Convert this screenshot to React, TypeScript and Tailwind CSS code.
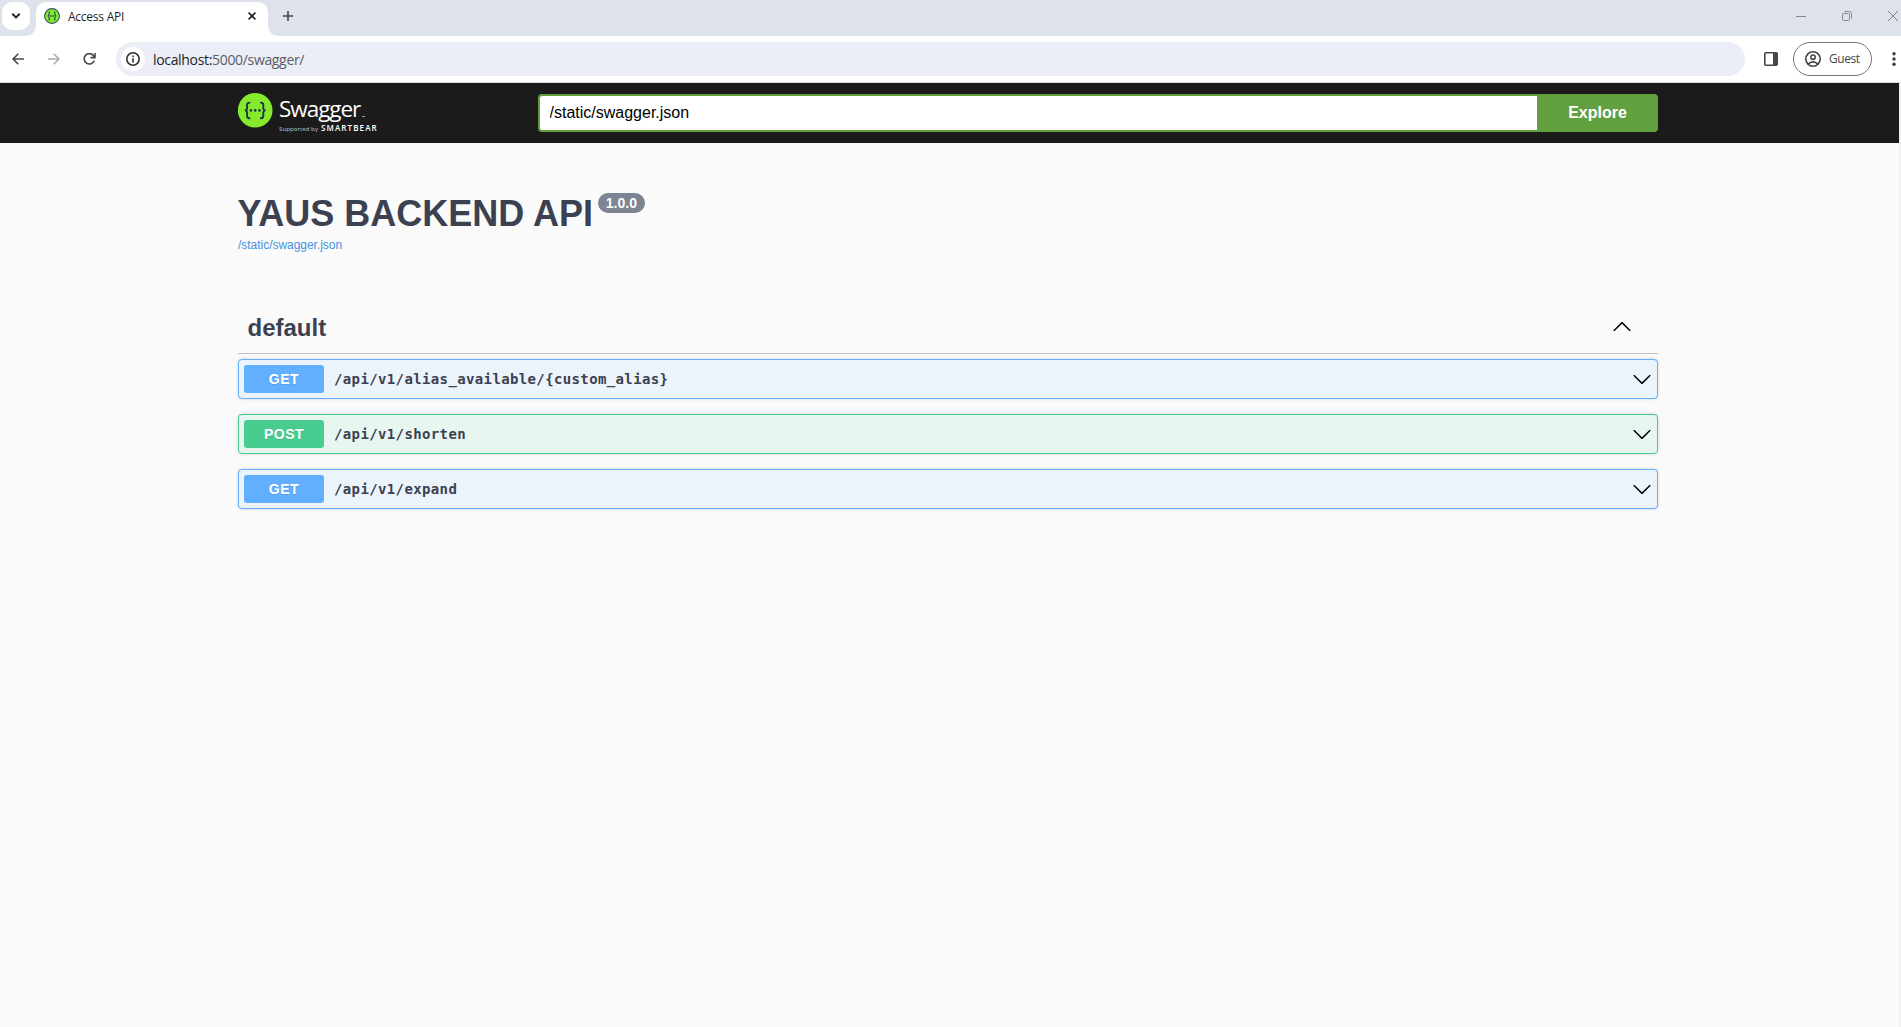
import React from "react";

type Method = "GET" | "POST";

const operations: { method: Method; path: string }[] = [
  { method: "GET", path: "/api/v1/alias_available/{custom_alias}" },
  { method: "POST", path: "/api/v1/shorten" },
  { method: "GET", path: "/api/v1/expand" },
];

const rowStyles: Record<Method, string> = {
  GET: "border-[#61affe] bg-[#ebf3fb]",
  POST: "border-[#49cc90] bg-[#e8f6f0]",
};

const badgeStyles: Record<Method, string> = {
  GET: "bg-[#61affe]",
  POST: "bg-[#49cc90]",
};

function Chevron({ up = false }: { up?: boolean }) {
  return (
    <svg width="20" height="20" viewBox="0 0 20 20" className={up ? "rotate-180" : ""}>
      <path d="M17.418 6.109c.272-.268.709-.268.979 0s.271.701 0 .969l-7.908 7.83c-.27.268-.707.268-.979 0l-7.908-7.83c-.27-.268-.27-.701 0-.969.271-.268.709-.268.979 0L10 13.25z" />
    </svg>
  );
}

function TabStrip() {
  return (
    <div className="flex h-9 bg-[#dee3eb]">
      <div className="flex w-9 shrink-0 flex-col">
        <div className="ml-[2px] mt-[2px] flex h-7 w-7 items-center justify-center rounded-[10px] bg-white">
          <svg width="10" height="6" viewBox="0 0 10 6" fill="none" stroke="#1f1f1f" strokeWidth="1.9">
            <path d="M1.3 .8 5 4.4 8.7 .8" />
          </svg>
        </div>
      </div>
      <div className="relative mt-[2px] flex h-[34px] w-[232px] shrink-0 rounded-t-[10px] bg-white">
        <svg className="absolute -left-[10px] bottom-0" width="10" height="10"><path d="M10 0v10H0A10 10 0 0 0 10 0" fill="#fff" /></svg>
        <svg className="absolute -right-[10px] bottom-0" width="10" height="10"><path d="M0 0v10h10A10 10 0 0 1 0 0" fill="#fff" /></svg>
        <svg className="ml-2 mt-[6px] shrink-0" width="16" height="16" viewBox="0 0 16 16" fill="none">
          <circle cx="8" cy="8" r="7.4" fill="#85ea2d" stroke="#30555f" strokeWidth="1.1" />
          <path d="M6.2 4C4.6 4 5.1 5.3 5 6.500 5 7.600 4.400 8 3.700 8c.7 0 1.300.4 1.300 1.500.1 1.200-.4 2.500 1.200 2.500M9.800 4c1.600 0 1.100 1.300 1.200 2.500 0 1.100.6 1.500 1.300 1.500-.7 0-1.300.4-1.300 1.500-.1 1.200.4 2.500-1.200 2.500M5.500 8h5" stroke="#224752" strokeWidth="1.1" />
        </svg>
        <span className="ml-2 mt-[6px] whitespace-nowrap font-['Open_Sans',sans-serif] text-[12px] leading-[18px] tracking-[-0.25px] text-[#1f1f1f]">Access API</span>
        <svg className="ml-auto mr-3 mt-[10px]" width="8" height="8" viewBox="0 0 8 8" stroke="#1f1f1f" strokeWidth="1.6"><path d="M.6.6l6.800 6.800M7.400.6.600 7.400" /></svg>
      </div>
      <svg className="ml-[15px] mt-[11px]" width="10" height="10" viewBox="0 0 10 10" stroke="#474747" strokeWidth="1.6"><path d="M5 0v10M0 5h10" /></svg>
      <div className="ml-auto flex h-8 items-center pr-[3px]">
        <svg width="10" height="10" viewBox="0 0 10 10" stroke="#85898e"><path d="M0 5.500h10" /></svg>
        <svg className="ml-9" width="10" height="10" viewBox="0 0 10 10" fill="none" stroke="#85898e">
          <rect x=".5" y="2.500" width="7" height="7" rx="1" />
          <path d="M2.500.5h5a2 2 0 0 1 2 2v5" />
        </svg>
        <svg className="ml-9" width="10" height="10" viewBox="0 0 10 10" stroke="#7c7f84" strokeWidth="1"><path d="M0 0l10 10M10 0 0 10" /></svg>
      </div>
    </div>
  );
}

function Toolbar() {
  return (
    <div className="flex h-[47px] items-center border-b border-[#dcdcdc] bg-white">
      <svg className="ml-3" width="12" height="12" viewBox="0 0 12 12" fill="none" stroke="#474747" strokeWidth="1.600"><path d="M12 6H1.200M6.300.7 1.100 6l5.200 5.300" /></svg>
      <svg className="ml-6" width="12" height="12" viewBox="0 0 12 12" fill="none" stroke="#adadad" strokeWidth="1.600"><path d="M0 6h10.800M5.700.7 10.900 6l-5.200 5.300" /></svg>
      <svg className="ml-[23px]" width="13" height="12" viewBox="0 0 13 12" fill="none" stroke="#474747" strokeWidth="1.600"><path d="M11 3.400A5.200 5.200 0 1 0 11.300 7.500M12 0v4.600H7.500" /></svg>
      <div className="ml-5 flex h-[34px] w-[1629px] shrink-0 items-center rounded-full bg-[#ebeef7]">
        <div className="ml-[5px] flex h-6 w-6 items-center justify-center rounded-full bg-white">
          <svg width="14" height="14" viewBox="0 0 14 14" fill="none" stroke="#303030" strokeWidth="1.600"><circle cx="7" cy="7" r="6.200" /><path d="M7 6.200v4.200M7 3.500v1.600" /></svg>
        </div>
        <span className="ml-2 mt-px whitespace-nowrap font-['Open_Sans',sans-serif] text-[14px] leading-5 tracking-[-0.33px] text-[#5a5c61]"><span className="text-[#1f1f1f]">localhost:</span>5000/swagger/</span>
      </div>
      <svg className="ml-[19px] shrink-0" width="14" height="14" viewBox="0 0 14 14"><rect x=".8" y=".8" width="12.400" height="12.400" rx="1" fill="none" stroke="#474747" strokeWidth="1.600" /><path d="M9 1h4v12H9z" fill="#474747" /></svg>
      <div className="ml-[15px] flex h-[34px] w-[79px] shrink-0 items-center rounded-full border border-[#747775]">
        <svg className="ml-[11px]" width="16" height="16" viewBox="0 0 16 16" fill="none" stroke="#444746" strokeWidth="1.600"><circle cx="8" cy="8" r="7.200" /><circle cx="8" cy="6.200" r="2.200" /><path d="M3.200 13.100c2.500-3 7.100-3 9.600 0" /></svg>
        <span className="ml-2 font-['Open_Sans',sans-serif] text-[12px] leading-4 tracking-[-0.45px] text-[#474747]">Guest</span>
      </div>
      <svg className="ml-5 shrink-0" width="4" height="14" viewBox="0 0 4 14" fill="#3c3c3c"><circle cx="2" cy="1.800" r="1.700" /><circle cx="2" cy="7" r="1.700" /><circle cx="2" cy="12.300" r="1.700" /></svg>
    </div>
  );
}

function SwaggerLogo() {
  return (
    <div className="flex h-10 w-[300px] shrink-0 items-start">
      <svg className="shrink-0" width="35" height="35" viewBox="0 0 35 35" fill="none">
        <circle cx="17.200" cy="17.300" r="17.300" fill="#85ea2d" />
        <path d="M12.300 9.600c-3.200-.2-3.400 1.300-3.200 3.500.2 2.500 0 4.200-2.200 4.300 2.200.1 2.400 1.800 2.200 4.300-.2 2.200 0 3.700 3.200 3.500M22.100 9.600c3.200-.2 3.400 1.300 3.200 3.500-.2 2.500 0 4.200 2.200 4.300-2.200.1-2.400 1.800-2.200 4.300.2 2.200 0 3.700-3.200 3.500" stroke="#173647" strokeWidth="1.900" />
        <g fill="#173647"><circle cx="12.900" cy="17.400" r="1.300" /><circle cx="17.200" cy="17.400" r="1.300" /><circle cx="21.500" cy="17.400" r="1.300" /></g>
      </svg>
      <div className="ml-[6px] font-['Open_Sans',sans-serif] text-white">
        <div className="flex h-[31px] items-end whitespace-nowrap">
          <span className="text-[22.500px] font-normal leading-[31px] tracking-[-1.05px]">Swagger</span>
          <span className="mb-[7px] ml-[2px] h-px w-[3px] bg-[#a0a0a0]" />
        </div>
        <div className="-mt-px flex items-baseline whitespace-nowrap leading-[9px]">
          <span className="text-[6px] tracking-[0.1px] text-[#c8c8c8]">Supported by</span>
          <span className="ml-[3px] text-[8px] font-semibold tracking-[1.1px]">SMARTBEAR</span>
        </div>
      </div>
    </div>
  );
}

function TopBar() {
  return (
    <header className="h-[60px] bg-[#1b1b1b]">
      <div className="ml-[238px] flex w-[1420px] items-start pt-[10px]">
        <SwaggerLogo />
        <div className="mt-px flex h-[38px] flex-1">
          <input
            readOnly
            value="/static/swagger.json"
            className="h-full min-w-0 flex-1 rounded-l-[4px] border-2 border-r-0 border-[#62a03f] bg-white pl-[9.500px] pr-[10px] text-[16px] text-black outline-none"
          />
          <button className="w-[121px] rounded-r-[4px] bg-[#62a03f] text-[16px] font-bold text-white">Explore</button>
        </div>
      </div>
    </header>
  );
}

export default function App() {
  return (
    <div className="flex h-[1027px] w-[1901px] flex-col overflow-hidden bg-[#f0f0f0] font-['Liberation_Sans',Arial,sans-serif]">
      <TabStrip />
      <Toolbar />
      <div className="w-[1899px] flex-1 bg-[#fafafa] text-[#3b4151]">
        <TopBar />
        <main className="ml-[238px] w-[1420px]">
          <section className="h-[150px] pt-[50px]">
            <h1 className="-ml-[0.500px] flex items-start text-[36px] font-bold leading-[41px]">
              YAUS BACKEND API
              <span className="ml-[5px] flex h-5 w-[47px] items-center justify-center rounded-full bg-[#7d8492] text-[14px] leading-5 text-white">1.0.0</span>
            </h1>
            <a className="block pt-1 text-[12px] leading-[14px] tracking-[-0.03px] text-[#4990e2]">/static/swagger.json</a>
          </section>
          <section>
            <div className="flex h-[61px] items-center justify-between border-b border-[#c0c2c5] pl-[9.500px] pr-[26px] pt-[7px]">
              <h2 className="pt-[3px] text-[24px] font-bold leading-7">default</h2>
              <Chevron up />
            </div>
            <div className="flex flex-col gap-[15px] pt-[5px]">
              {operations.map((op) => (
                <div key={op.path} className={`flex h-10 items-center rounded-[4px] border pl-[5px] pr-[5px] shadow-[0_0_3px_rgba(0,0,0,0.19)] ${rowStyles[op.method]}`}>
                  <span className={`flex h-7 w-20 items-center justify-center rounded-[3px] text-[14px] font-bold tracking-[0.5px] text-white [text-shadow:0_1px_0_rgba(0,0,0,0.1)] ${badgeStyles[op.method]}`}>{op.method}</span>
                  <span className="ml-[10px] font-['DejaVu_Sans_Mono',monospace] text-[14px] font-bold leading-5 tracking-[0.37px]">{op.path}</span>
                  <span className="ml-auto"><Chevron /></span>
                </div>
              ))}
            </div>
          </section>
        </main>
      </div>
    </div>
  );
}
